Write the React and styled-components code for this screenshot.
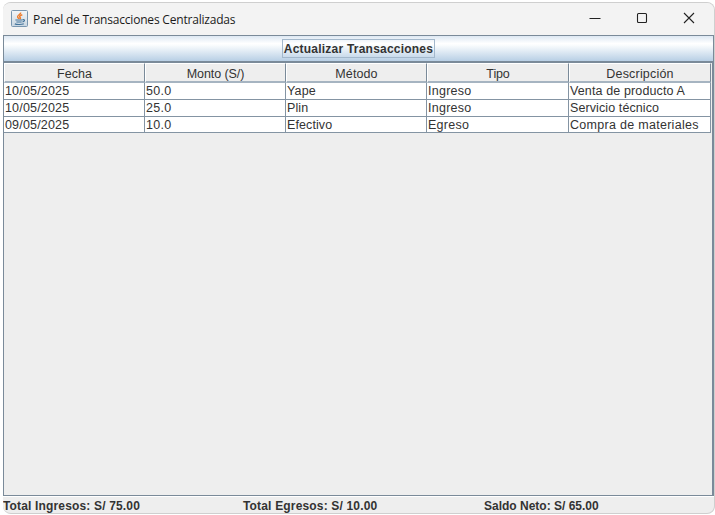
import React from "react";
import styled, { createGlobalStyle } from "styled-components";

const Global = createGlobalStyle`
  * { box-sizing: border-box; }
  body { margin: 0; background: #fff; overflow: hidden; }
`;

const Screen = styled.main`
  width: 715px;
  height: 515px;
  padding: 2px 0 1px 3px;
  font-family: "Liberation Sans", Arial, sans-serif;
  color: #333;
`;

const Window = styled.section`
  display: flex;
  flex-direction: column;
  width: 712px;
  height: 512px;
  overflow: hidden;
  background: #eee;
  border: solid #cfcfcf;
  border-width: 1px 1px 1px 0;
  border-radius: 8px;
`;

const TitleBar = styled.header`
  display: flex;
  align-items: center;
  flex: 0 0 32px;
  padding-left: 8px;
  background: #f3f3f3;
`;

const Title = styled.h1`
  flex: 1;
  margin: 1px 0 0 5px;
  font: 400 12px/16px "Open Sans", "Noto Sans", sans-serif;
  letter-spacing: -0.2px;
  color: #1b1b1b;
  white-space: nowrap;
`;

const Controls = styled.div`
  display: flex;
  padding-right: 2px;
`;

const ControlButton = styled.button`
  display: grid;
  place-items: center;
  width: 47px;
  height: 32px;
  padding: 0 0 2px;
  border: 0;
  background: none;
  color: #222;
`;

const RefreshButton = styled.button`
  display: flex;
  align-items: center;
  justify-content: center;
  flex: 0 0 27px;
  padding: 0;
  border: 1px solid #7a8a99;
  background: linear-gradient(#dde8f3 0%, #fff 30%, #fbfdfe 36%, #b8cfe5 100%);
  color: #333;
`;

const FocusLabel = styled.span`
  width: 153px;
  height: 19px;
  border: 1px solid #a3b8cc;
  font: 700 12px/18px "Liberation Sans", Arial, sans-serif;
  letter-spacing: 0.22px;
  white-space: nowrap;
`;

const ScrollPane = styled.div`
  flex: 1;
  min-height: 0;
  border: solid #7a8a99;
  border-width: 1px 2px 1px 1px;
`;

const Table = styled.div`
  width: 707px;
  font-size: 12.5px;
  line-height: 16px;
`;

const Row = styled.div`
  display: grid;
  grid-template-columns: 141px 141px 141px 142px 142px;
  grid-template-rows: 100%;
  height: ${({ $height }) => $height}px;
`;

const HeaderCell = styled.div`
  padding-top: 2px;
  border: solid;
  border-width: 1px 1px 2px 1px;
  border-color: #fff #7a8a99 #a6b4c1 #fff;
  background: #eee;
  letter-spacing: ${({ $spacing }) => $spacing}px;
  text-align: center;
`;

const Cell = styled.div`
  padding-left: 1px;
  border: solid #8494a3;
  border-width: 0 1px 1px 0;
  background: #fff;
  letter-spacing: ${({ $spacing }) => $spacing}px;
  white-space: nowrap;
`;

const Totals = styled.footer`
  display: grid;
  grid-template-columns: 240px 241px 1fr;
  flex: 0 0 17px;
  min-height: 0;
  border-top: 1px solid #fff;
`;

const Total = styled.div`
  font-size: 12px;
  font-weight: 700;
  line-height: 18px;
  letter-spacing: ${({ $spacing }) => $spacing}px;
  white-space: nowrap;
`;

const JavaMark = styled.svg`
  margin-bottom: 1px;
`;

const JavaIcon = () => (
  <JavaMark width="17" height="17" viewBox="0 0 17 17" fill="none">
    <defs>
      <linearGradient id="tile" x1="0" y1="0" x2="0" y2="1">
        <stop stopColor="#f4f6f8" />
        <stop offset="1" stopColor="#c7d5e1" />
      </linearGradient>
    </defs>
    <rect x=".5" y=".5" width="16" height="16" rx="1" fill="url(#tile)" stroke="#7896b0" />
    <path d="M9.6 2.4C10.4 4.5 5.8 5 6.6 7.1C6.9 7.9 7.8 8.2 7.8 9M11.3 4.7C8.6 5.6 8 6.7 9.2 7.6C9.7 8.1 9.2 8.7 8.8 9" stroke="#ee7d2e" strokeWidth="1.5" />
    <path d="M4.4 10H11.2M11.5 9.8C14.4 9.2 13.9 11.5 11.5 11.9M5.4 12H10.7M3.8 13.9C5.5 14.7 10.7 14.7 12.8 13.8" stroke="#43749b" strokeWidth="1.2" />
  </JavaMark>
);

const ControlIcon = ({ kind }) => (
  <svg width="12" height="12" viewBox="0 0 12 12" fill="none" stroke="currentColor" strokeWidth="1.1">
    {kind === "minimize" && <path d="M.5 6.5h11" />}
    {kind === "maximize" && <rect x="1.5" y="1.5" width="9" height="9" rx="1" />}
    {kind === "close" && <path d="M1 1l10 10M11 1L1 11" />}
  </svg>
);

const headers = [
  ["Fecha", 0.05],
  ["Monto (S/)", -0.08],
  ["Método", 0.12],
  ["Tipo", -0.15],
  ["Descripción", 0.19],
];

const rows = [
  {
    height: 17,
    cells: [["10/05/2025", 0.17], ["50.0", 0.25], ["Yape", 0.15], ["Ingreso", 0.25], ["Venta de producto A", 0.13]],
  },
  {
    height: 17,
    cells: [["10/05/2025", 0.17], ["25.0", 0.25], ["Plin", 0.1], ["Ingreso", 0.25], ["Servicio técnico", 0.1]],
  },
  {
    height: 16,
    cells: [["09/05/2025", 0.17], ["10.0", 0.25], ["Efectivo", 0.1], ["Egreso", 0.27], ["Compra de materiales", 0.29]],
  },
];

const totals = [
  ["Total Ingresos: S/ 75.00", 0.16],
  ["Total Egresos: S/ 10.00", 0.17],
  ["Saldo Neto: S/ 65.00", 0],
];

export default function App() {
  return (
    <Screen>
      <Global />
      <Window>
        <TitleBar>
          <JavaIcon />
          <Title>Panel de Transacciones Centralizadas</Title>
          <Controls>
            {["minimize", "maximize", "close"].map((kind) => (
              <ControlButton key={kind} aria-label={kind}>
                <ControlIcon kind={kind} />
              </ControlButton>
            ))}
          </Controls>
        </TitleBar>
        <RefreshButton>
          <FocusLabel>Actualizar Transacciones</FocusLabel>
        </RefreshButton>
        <ScrollPane>
          <Table>
            <Row $height={20}>
              {headers.map(([text, spacing]) => (
                <HeaderCell key={text} $spacing={spacing}>{text}</HeaderCell>
              ))}
            </Row>
            {rows.map(({ height, cells }, i) => (
              <Row key={i} $height={height}>
                {cells.map(([text, spacing], j) => (
                  <Cell key={j} $spacing={spacing}>{text}</Cell>
                ))}
              </Row>
            ))}
          </Table>
        </ScrollPane>
        <Totals>
          {totals.map(([text, spacing]) => (
            <Total key={text} $spacing={spacing}>{text}</Total>
          ))}
        </Totals>
      </Window>
    </Screen>
  );
}
